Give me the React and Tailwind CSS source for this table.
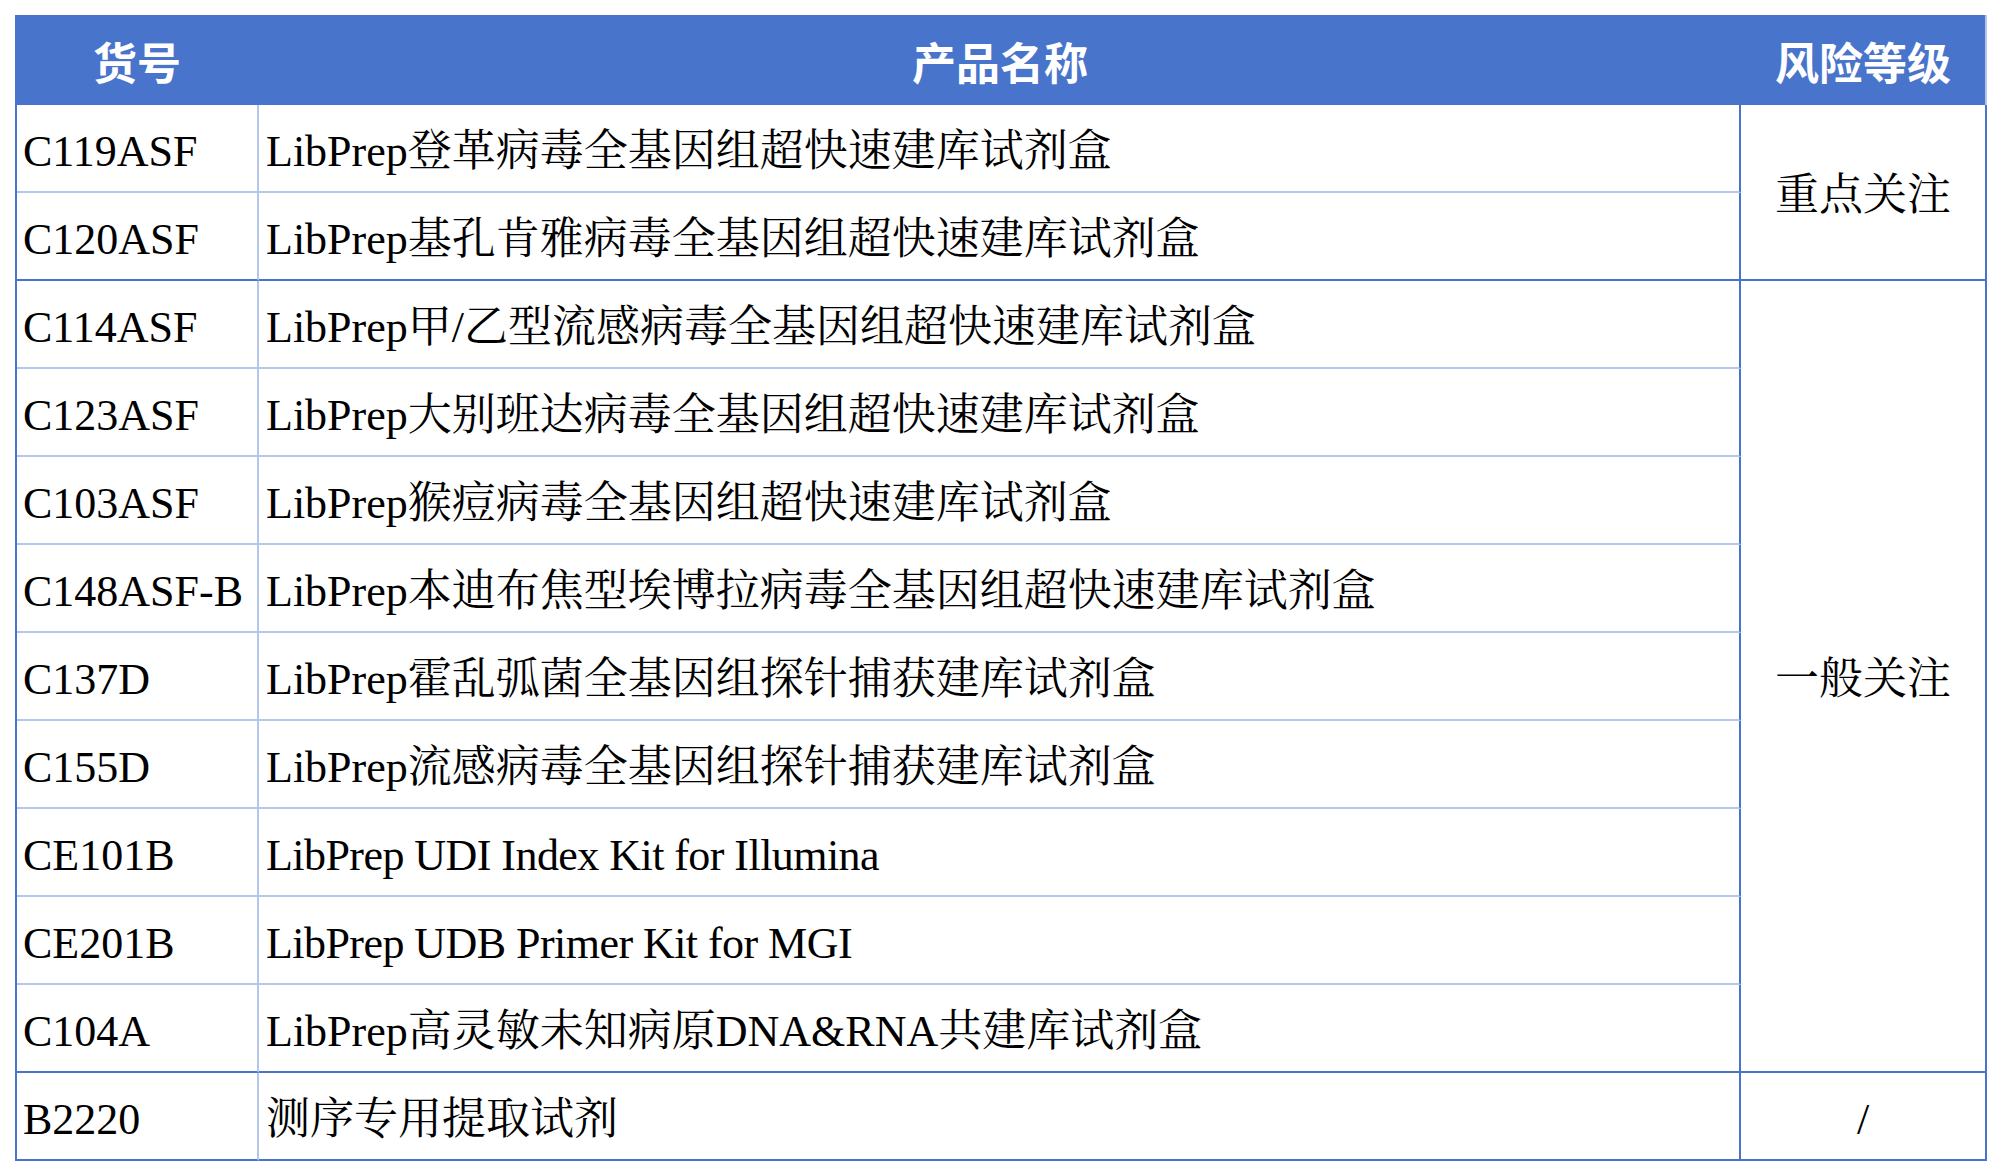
import React from "react";

const groups = [
  {
    level: "重点关注",
    span: "row-span-2",
    rows: [
      ["C119ASF", "LibPrep登革病毒全基因组超快速建库试剂盒"],
      ["C120ASF", "LibPrep基孔肯雅病毒全基因组超快速建库试剂盒"],
    ],
  },
  {
    level: "一般关注",
    span: "row-span-9",
    rows: [
      ["C114ASF", "LibPrep甲/乙型流感病毒全基因组超快速建库试剂盒"],
      ["C123ASF", "LibPrep大别班达病毒全基因组超快速建库试剂盒"],
      ["C103ASF", "LibPrep猴痘病毒全基因组超快速建库试剂盒"],
      ["C148ASF-B", "LibPrep本迪布焦型埃博拉病毒全基因组超快速建库试剂盒"],
      ["C137D", "LibPrep霍乱弧菌全基因组探针捕获建库试剂盒"],
      ["C155D", "LibPrep流感病毒全基因组探针捕获建库试剂盒"],
      ["CE101B", "LibPrep UDI Index Kit for Illumina", true],
      ["CE201B", "LibPrep UDB Primer Kit for MGI", true],
      ["C104A", "LibPrep高灵敏未知病原DNA&RNA共建库试剂盒"],
    ],
  },
  {
    level: "/",
    span: "row-span-1",
    rows: [["B2220", "测序专用提取试剂"]],
  },
];

const serif = {
  fontFamily:
    '"Liberation Serif", "Noto Serif CJK SC", "Noto Sans CJK SC", serif',
};

export default function App() {
  const cells = [];
  groups.forEach((g, gi) => {
    g.rows.forEach((r, ri) => {
      const last = ri === g.rows.length - 1;
      cells.push(
        <div
          key={`a${gi}-${ri}`}
          className={
            "col-start-1 flex items-center pl-[6px] pt-[8px] border-r-2 border-r-[#b4c6ea] border-b-2 whitespace-nowrap " +
            (last ? "border-b-[#4874cb]" : "border-b-[#b4c6ea]")
          }
        >
          {r[0]}
        </div>
      );
      cells.push(
        <div
          key={`b${gi}-${ri}`}
          className={
            "col-start-2 flex items-center pl-[7px] pt-[8px] border-r-2 border-r-[#4874cb] border-b-2 whitespace-nowrap " +
            (last ? "border-b-[#4874cb]" : "border-b-[#b4c6ea]") +
            (r[2] ? " tracking-[-0.55px]" : "")
          }
        >
          {r[1]}
        </div>
      );
      if (ri === 0) {
        cells.push(
          <div
            key={`c${gi}`}
            className={
              "col-start-3 flex items-center justify-center pt-[8px] border-b-2 border-b-[#4874cb] " +
              g.span
            }
          >
            {g.level}
          </div>
        );
      }
    });
  });

  return (
    <div className="w-[2002px] h-[1176px] bg-white pt-[15px] pl-[15px]">
      <div className="w-[1972px]">
        <div
          className="grid grid-cols-[244px_1482px_244px] h-[90px] bg-[#4874cb] border-r-2 border-r-[#b4c6ea] text-white font-bold text-[44px] leading-none"
          style={{ fontFamily: '"Noto Sans CJK SC", "Noto Sans", sans-serif' }}
        >
          <div className="flex items-center justify-center pt-[2px]">货号</div>
          <div className="flex items-center justify-center pt-[2px]">产品名称</div>
          <div className="flex items-center justify-center pt-[2px]">风险等级</div>
        </div>
        <div
          className="grid grid-cols-[242px_1482px_244px] grid-rows-[repeat(12,88px)] border-l-2 border-r-2 border-[#4874cb] text-[44px] text-black leading-none"
          style={serif}
        >
          {cells}
        </div>
      </div>
    </div>
  );
}
